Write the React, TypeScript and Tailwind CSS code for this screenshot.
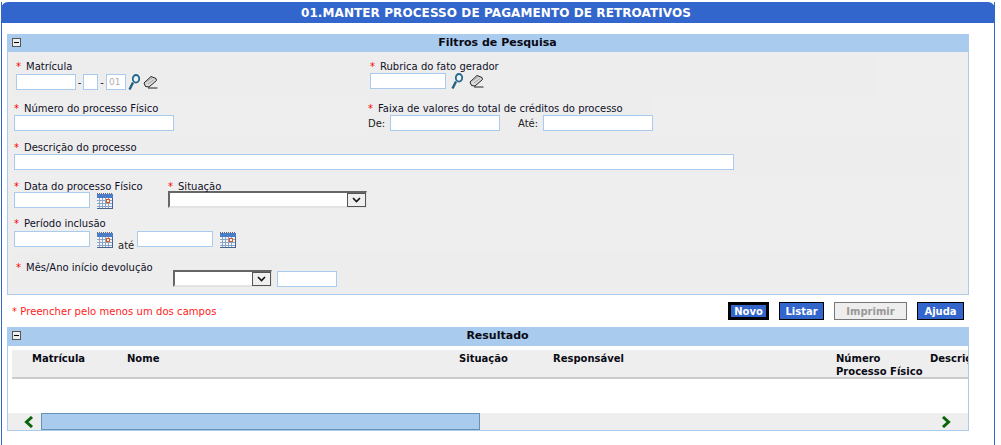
const font = { fontFamily: '"DejaVu Sans", Verdana, sans-serif' };

function Star() {
  return <span className="text-[#ff0000] mr-[5px]">*</span>;
}

function Label({ text, className = "" }: { text: string; className?: string }) {
  return (
    <div className={`h-[13px] leading-[15px] text-[10px] text-[#101028] whitespace-nowrap ${className}`}>
      <Star />
      {text}
    </div>
  );
}

function Input({ className = "", value }: { className?: string; value?: string }) {
  return (
    <div className={`h-[16px] shrink-0 bg-white border border-[#a9cbee] text-[9px] leading-[14px] pl-[2px] text-[#b0b0b0] ${className}`}>
      {value}
    </div>
  );
}

function Lens() {
  return (
    <svg width="14" height="16" viewBox="0 0 14 16" className="shrink-0">
      <path d="M1.5 15.5 L5 8.5" stroke="#1f5f80" strokeWidth="2.4" fill="none" />
      <ellipse cx="8" cy="4.8" rx="3.2" ry="3.8" stroke="#24698c" strokeWidth="1.8" fill="#eef3f6" />
    </svg>
  );
}

function Eraser() {
  return (
    <svg width="15" height="14" viewBox="0 0 15 14" className="shrink-0">
      <path d="M1 8 L8 1.5 L13 3.5 L13.5 5.5 L6 12 L2.5 11.5 Z" fill="#dcdcdc" stroke="#222" strokeWidth="1" />
      <path d="M3 7 L9 3 M5 9 L11 4.5" stroke="#a0a0a0" strokeWidth="1" />
      <path d="M5 13 H14.5" stroke="#222" strokeWidth="1" />
    </svg>
  );
}

function Calendar() {
  return (
    <svg width="16" height="16" viewBox="0 0 16 16" className="shrink-0">
      <rect x="0" y="1" width="16" height="15" fill="#f1f4f9" />
      <path d="M0 0.5 H16" stroke="#666" strokeDasharray="1 1" />
      <rect x="0" y="1" width="16" height="4" fill="#4a7cc8" />
      <path d="M0 7.5 H16 M0 10.5 H16 M0 13.5 H16 M2.5 5 V16 M5.5 5 V16 M8.5 5 V16 M11.5 5 V16" stroke="#8ea4c4" strokeWidth="1" />
      <path d="M15.5 5 V16 M0 15.5 H16" stroke="#47658f" />
      <rect x="9.5" y="6.5" width="3" height="3" fill="#fff" stroke="#e0541f" />
    </svg>
  );
}

function Select({ className = "" }: { className?: string }) {
  return (
    <div className={`h-[17px] shrink-0 flex bg-white border-t-2 border-l-2 border-r border-b-2 border-t-[#666666] border-l-[#666666] border-r-[#e3e3e3] border-b-[#e3e3e3] ${className}`}>
      <div className="flex-1" />
      <div className="w-[19px] h-[14px] flex items-center justify-center bg-[#efefef] border border-[#555555]">
        <svg width="9" height="6" viewBox="0 0 9 6">
          <path d="M1 1 L4.5 4.5 L8 1" stroke="#111" strokeWidth="1.6" fill="none" />
        </svg>
      </div>
    </div>
  );
}

function PanelHeader({ title, className = "" }: { title: string; className?: string }) {
  return (
    <div className={`relative bg-[#a9cbee] flex items-center justify-center pl-[19px] text-[11px] font-bold text-[#0a0a14] ${className}`}>
      <div className="absolute left-[5px] top-[4px] w-[9px] h-[9px] bg-[#eeeeee] border border-[#555555] flex items-center justify-center">
        <div className="w-[5px] h-[1px] bg-black" />
      </div>
      {title}
    </div>
  );
}

function Button({ text, className = "" }: { text: string; className?: string }) {
  return (
    <div className={`h-[18px] flex items-center justify-center text-[10px] font-bold bg-[#3366cc] text-white border border-black ${className}`}>
      {text}
    </div>
  );
}

function Th({ className = "", children }: { className?: string; children: React.ReactNode }) {
  return <div className={`shrink-0 text-[10px] leading-[13px] font-bold text-[#0a0a14] whitespace-nowrap ${className}`}>{children}</div>;
}

export default function App() {
  return (
    <div className="w-[1001px] h-[445px] bg-white overflow-hidden pt-[2px] pl-[1px]" style={font}>
      <div className="w-[994px] h-[443px] border-x border-[#3366cc]">
        <div className="-mx-[1px] h-[21px] bg-[#3366cc] rounded-t-[7px] flex items-center justify-center pr-[4px] text-white font-bold text-[12px] tracking-[0.09px]">
          01.MANTER PROCESSO DE PAGAMENTO DE RETROATIVOS
        </div>

        <div className="ml-[5px] mt-[11px] w-[962px]">
          <PanelHeader title="Filtros de Pesquisa" className="h-[18px]" />
          <div className="h-[243px] bg-[#eeeeee] border border-t-0 border-[#a9cbee] pl-[6px] pt-[3px]">
            {/* row 1 */}
            <div className="flex h-[42px] w-[860px] bg-[#ededed] pt-[4px]">
              <div className="w-[354px] pl-[2px]">
                <Label text="Matrícula" />
                <div className="flex items-center mt-[2px] text-[10px] text-[#222]">
                  <Input className="w-[60px]" />
                  <span className="w-[7px] text-center">-</span>
                  <Input className="w-[15px]" />
                  <span className="w-[8px] text-center">-</span>
                  <Input className="w-[20px]" value="01" />
                  <span className="ml-[2px]"><Lens /></span>
                  <span className="ml-[1px]"><Eraser /></span>
                </div>
              </div>
              <div className="pl-[2px]">
                <Label text="Rubrica do fato gerador" />
                <div className="flex items-center mt-[1px]">
                  <Input className="w-[76px]" />
                  <span className="ml-[5px]"><Lens /></span>
                  <span className="ml-[4px]"><Eraser /></span>
                </div>
              </div>
            </div>
            {/* row 2 */}
            <div className="flex h-[39px] pt-[4px]">
              <div className="w-[354px]">
                <Label text="Número do processo Físico" />
                <Input className="w-[160px] mt-[1px]" />
              </div>
              <div className="w-[285px] bg-[#ededed] -mt-[4px] pt-[4px]">
                <Label text="Faixa de valores do total de créditos do processo" />
                <div className="flex items-center mt-[1px] text-[10px] text-[#222]">
                  <span className="w-[22px]">De:</span>
                  <Input className="w-[110px]" />
                  <span className="w-[43px] pl-[18px]">Até:</span>
                  <Input className="w-[110px]" />
                </div>
              </div>
            </div>
            {/* row 3 */}
            <div className="h-[39px] pt-[4px] bg-[#ededed] w-[945px]">
              <Label text="Descrição do processo" />
              <Input className="w-[720px] mt-[1px]" />
            </div>
            {/* row 4 */}
            <div className="flex h-[36px] pt-[4px]">
              <div className="w-[154px]">
                <Label text="Data do processo Físico" />
                <div className="flex items-start">
                  <Input className="w-[76px]" />
                  <span className="ml-[7px] mt-[1px]"><Calendar /></span>
                </div>
              </div>
              <div>
                <Label text="Situação" />
                <Select className="w-[199px] -mt-[1px]" />
              </div>
            </div>
            {/* row 5 */}
            <div className="h-[41px] pt-[5px]">
              <Label text="Período inclusão" />
              <div className="flex items-start mt-[1px]">
                <Input className="w-[76px] mt-[1px]" />
                <span className="ml-[7px] mt-[2px]"><Calendar /></span>
                <span className="ml-[5px] mt-[10px] text-[10px] leading-[12px] text-[#222]">até</span>
                <Input className="w-[76px] ml-[3px] mt-[1px]" />
                <span className="ml-[7px] mt-[2px]"><Calendar /></span>
              </div>
            </div>
            {/* row 6 */}
            <div className="flex h-[35px] bg-[#ededed] w-[945px] pl-[2px] pt-[8px]">
              <div className="w-[157px]">
                <Label text="Mês/Ano início devolução" />
              </div>
              <div className="flex items-start pt-[10px]">
                <Select className="w-[99px]" />
                <Input className="w-[60px] ml-[5px] mt-[1px]" />
              </div>
            </div>
          </div>
        </div>

        {/* actions */}
        <div className="flex items-center h-[18px] mt-[7px] ml-[10px] w-[952px]">
          <div className="flex-1 text-[10px] text-[#ff1a1a] tracking-[0.06px] whitespace-nowrap">* Preencher pelo menos um dos campos</div>
          <Button text="Novo" className="w-[41px] !border-[3px]" />
          <Button text="Listar" className="w-[45px] ml-[10px]" />
          <Button text="Imprimir" className="w-[73px] ml-[10px] !bg-[#eeeeee] !text-[#999999] !border-[#777777]" />
          <Button text="Ajuda" className="w-[47px] ml-[10px]" />
        </div>

        <div className="ml-[5px] mt-[7px] w-[962px]">
          <PanelHeader title="Resultado" className="h-[19px]" />
          <div className="h-[85px] bg-white border border-t-0 border-[#a9cbee] flex flex-col">
            <div className="mt-[4px] ml-[4px] h-[29px] bg-[#eeeeee] border-b-2 border-[#cccccc] flex pt-[2px] overflow-hidden">
              <Th className="w-[115px] pl-[20px]">Matrícula</Th>
              <Th className="w-[332px]">Nome</Th>
              <Th className="w-[94px]">Situação</Th>
              <Th className="w-[283px]">Responsável</Th>
              <Th className="w-[94px]">Número<br />Processo Físico</Th>
              <Th>Descrição</Th>
            </div>
            <div className="flex-1" />
            <div className="h-[17px] bg-[#eeeeee] flex">
              <div className="w-[33px] flex items-center justify-center pl-[9px]">
                <svg width="10" height="12" viewBox="0 0 10 12">
                  <path d="M8 1 L2.5 6 L8 11" stroke="#0a650a" strokeWidth="3" fill="none" />
                </svg>
              </div>
              <div className="w-[439px] bg-[#a9cbee] border border-[#6692b5]" />
              <div className="flex-1 flex items-center justify-end pr-[17px]">
                <svg width="10" height="12" viewBox="0 0 10 12">
                  <path d="M2 1 L7.5 6 L2 11" stroke="#0a650a" strokeWidth="3" fill="none" />
                </svg>
              </div>
            </div>
          </div>
        </div>
      </div>
    </div>
  );
}
